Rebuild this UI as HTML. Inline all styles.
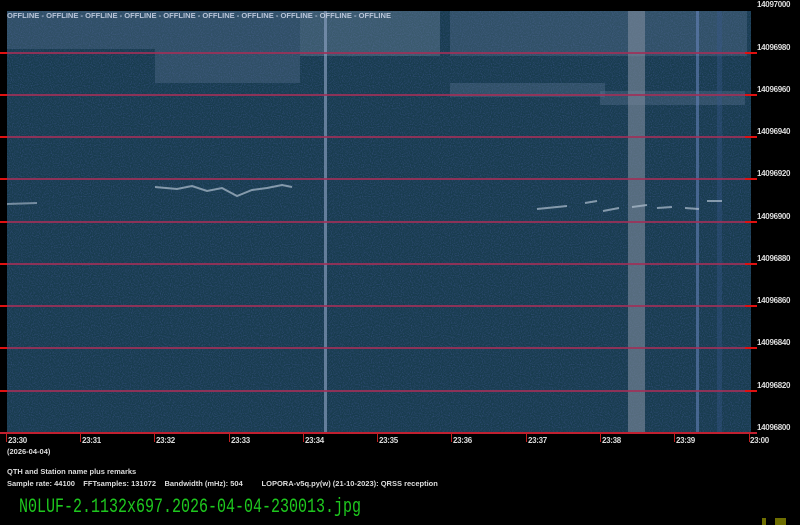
<!DOCTYPE html>
<html><head><meta charset="utf-8"><style>
*{margin:0;padding:0}
body{width:800px;height:525px;background:#000;position:relative;overflow:hidden;font-family:"Liberation Sans",sans-serif}
.a{position:absolute}
.wf{left:7px;top:11px;width:744px;height:422px;background:#183a50;overflow:hidden}
.hl{position:absolute;left:0;width:757px;height:2px;background:#a03058;opacity:0.85}
.fl{position:absolute;left:757px;font-size:8px;font-weight:bold;color:#ddd;letter-spacing:-0.3px}
.tl{position:absolute;top:436px;font-size:8px;font-weight:bold;color:#ddd;letter-spacing:-0.3px}
.tk{position:absolute;top:433px;width:1px;height:9px;background:#c02020}
.lt{position:absolute;font-size:7.5px;font-weight:bold;color:#ddd;white-space:nowrap}
.re{position:absolute;left:745px;width:12px;height:2px;background:#e01010}
.le{position:absolute;left:0;width:7px;height:2px;background:#e01010}
</style></head><body>
<div class="a wf">
<svg width="744" height="422" style="position:absolute;left:0;top:0">
<filter id="n"><feTurbulence type="fractalNoise" baseFrequency="0.9" numOctaves="1" seed="3"/><feColorMatrix values="0 0 0 0 0.08  0 0 0 0 0.12  0 0 0 0 0.4  0 0 0 1.4 -0.6"/></filter>
<rect width="744" height="422" fill="#183c4e"/>
<rect width="744" height="422" filter="url(#n)" opacity="0.8"/>
<rect x="0" y="0" width="148" height="38" fill="#6a82a0" opacity="0.28"/>
<rect x="148" y="0" width="145" height="72" fill="#6a82a0" opacity="0.28"/>
<rect x="293" y="0" width="140" height="45" fill="#7a92aa" opacity="0.35"/>
<rect x="443" y="0" width="297" height="45" fill="#6a82a0" opacity="0.3"/>
<rect x="443" y="72" width="155" height="14" fill="#6a82a0" opacity="0.3"/>
<rect x="593" y="80" width="145" height="14" fill="#6a82a0" opacity="0.3"/>
<rect x="621" y="0" width="17" height="422" fill="#7f8c9c" opacity="0.6"/>
<rect x="317" y="0" width="3" height="422" fill="#8aa0c0" opacity="0.65"/>
<rect x="689" y="0" width="3" height="422" fill="#6a86c0" opacity="0.55"/>
<rect x="710" y="0" width="5" height="422" fill="#3a5a90" opacity="0.35"/>
<path d="M148 176 L170 178 L185 175 L200 180 L215 177 L230 185 L245 179 L260 177 L275 174 L285 176" stroke="#b0c0d0" stroke-width="2" fill="none" opacity="0.7"/>
<path d="M0 193 L30 192" stroke="#b0c0d0" stroke-width="2" fill="none" opacity="0.6"/>
<path d="M530 198 L560 195 M578 192 L590 190 M596 200 L612 197 M625 196 L640 194 M650 197 L665 196 M678 197 L692 198 M700 190 L715 190" stroke="#b0c0d0" stroke-width="2" fill="none" opacity="0.7"/>
<text x="0" y="7" font-family="Liberation Sans" font-size="7" font-weight="bold" fill="#b8c4d8" textLength="384" lengthAdjust="spacingAndGlyphs">OFFLINE - OFFLINE - OFFLINE - OFFLINE - OFFLINE - OFFLINE - OFFLINE - OFFLINE - OFFLINE - OFFLINE</text>
</svg>
</div>
<div class="hl" style="top:52px"></div><div class="hl" style="top:94px"></div><div class="hl" style="top:136px"></div><div class="hl" style="top:178px"></div><div class="hl" style="top:221px"></div><div class="hl" style="top:263px"></div><div class="hl" style="top:305px"></div><div class="hl" style="top:347px"></div><div class="hl" style="top:390px"></div><div class="hl" style="top:432px;background:#c02030;opacity:1"></div>
<div class="re" style="top:52px"></div><div class="re" style="top:94px"></div><div class="re" style="top:136px"></div><div class="re" style="top:178px"></div><div class="re" style="top:221px"></div><div class="re" style="top:263px"></div><div class="re" style="top:305px"></div><div class="re" style="top:347px"></div><div class="re" style="top:390px"></div>
<div class="le" style="top:52px"></div><div class="le" style="top:94px"></div><div class="le" style="top:136px"></div><div class="le" style="top:178px"></div><div class="le" style="top:221px"></div><div class="le" style="top:263px"></div><div class="le" style="top:305px"></div><div class="le" style="top:347px"></div><div class="le" style="top:390px"></div>
<div class="fl" style="top:0px">14097000</div>
<div class="fl" style="top:43px">14096980</div>
<div class="fl" style="top:85px">14096960</div>
<div class="fl" style="top:127px">14096940</div>
<div class="fl" style="top:169px">14096920</div>
<div class="fl" style="top:212px">14096900</div>
<div class="fl" style="top:254px">14096880</div>
<div class="fl" style="top:296px">14096860</div>
<div class="fl" style="top:338px">14096840</div>
<div class="fl" style="top:381px">14096820</div>
<div class="fl" style="top:423px">14096800</div>
<div class="tk" style="left:6px"></div><div class="tl" style="left:8px">23:30</div>
<div class="tk" style="left:80px"></div><div class="tl" style="left:82px">23:31</div>
<div class="tk" style="left:154px"></div><div class="tl" style="left:156px">23:32</div>
<div class="tk" style="left:229px"></div><div class="tl" style="left:231px">23:33</div>
<div class="tk" style="left:303px"></div><div class="tl" style="left:305px">23:34</div>
<div class="tk" style="left:377px"></div><div class="tl" style="left:379px">23:35</div>
<div class="tk" style="left:451px"></div><div class="tl" style="left:453px">23:36</div>
<div class="tk" style="left:526px"></div><div class="tl" style="left:528px">23:37</div>
<div class="tk" style="left:600px"></div><div class="tl" style="left:602px">23:38</div>
<div class="tk" style="left:674px"></div><div class="tl" style="left:676px">23:39</div>
<div class="tk" style="left:749px"></div><div class="tl" style="left:750px">23:00</div>
<div class="lt" style="left:7px;top:447px">(2026-04-04)</div>
<div class="lt" style="left:7px;top:467px">QTH and Station name plus remarks</div>
<div class="lt" style="left:7px;top:479px">Sample rate: 44100 &nbsp;&nbsp; FFTsamples: 131072 &nbsp;&nbsp; Bandwidth (mHz): 504 &nbsp;&nbsp;&nbsp;&nbsp;&nbsp;&nbsp;&nbsp; LOPORA-v5q.py(w) (21-10-2023): QRSS reception</div>
<div class="a" style="left:19px;top:497px;font-family:'Liberation Mono',monospace;font-size:20px;line-height:22px;color:#1ec81e;transform:scaleX(0.75);transform-origin:0 0;white-space:nowrap">N0LUF-2.1132x697.2026-04-04-230013.jpg</div>
<div class="a" style="left:762px;top:518px;width:4px;height:7px;background:#6e6e00"></div>
<div class="a" style="left:775px;top:518px;width:11px;height:7px;background:#6e6e00"></div>
</body></html>
